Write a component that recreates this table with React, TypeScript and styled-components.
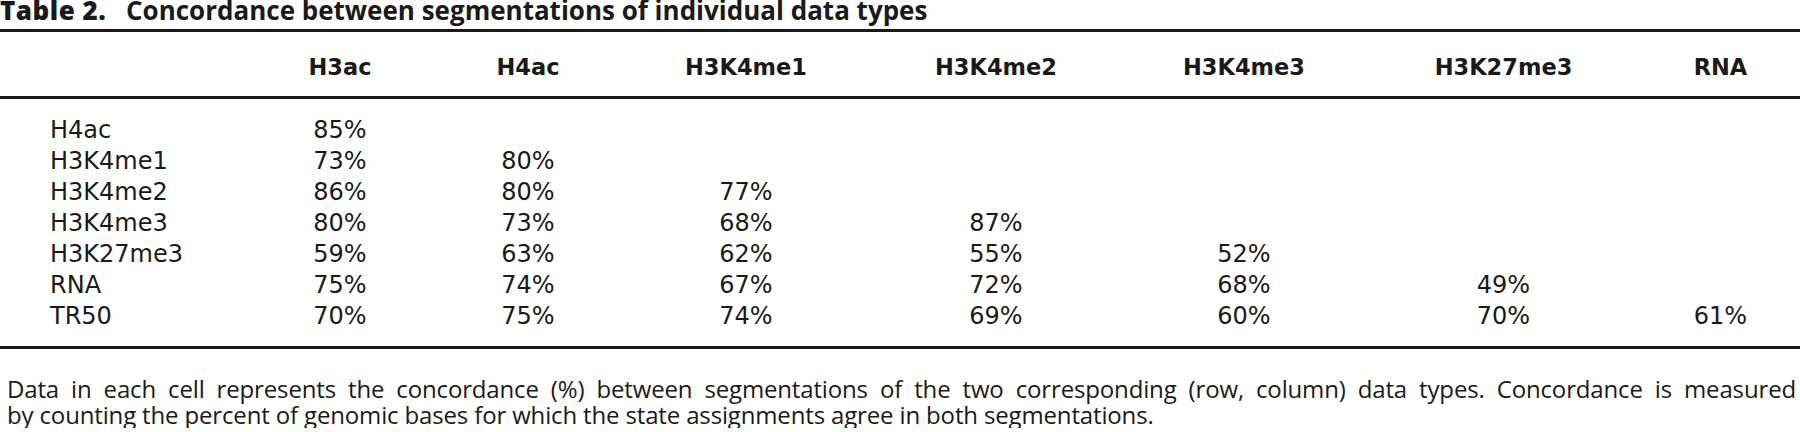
import styled, { createGlobalStyle } from "styled-components";

const GlobalStyle = createGlobalStyle`
  html, body {
    margin: 0;
    padding: 0;
    background: #ffffff;
  }
`;

const columns = ["H3ac", "H4ac", "H3K4me1", "H3K4me2", "H3K4me3", "H3K27me3", "RNA"];

const rows: { label: string; values: string[] }[] = [
  { label: "H4ac", values: ["85%"] },
  { label: "H3K4me1", values: ["73%", "80%"] },
  { label: "H3K4me2", values: ["86%", "80%", "77%"] },
  { label: "H3K4me3", values: ["80%", "73%", "68%", "87%"] },
  { label: "H3K27me3", values: ["59%", "63%", "62%", "55%", "52%"] },
  { label: "RNA", values: ["75%", "74%", "67%", "72%", "68%", "49%"] },
  { label: "TR50", values: ["70%", "75%", "74%", "69%", "60%", "70%", "61%"] },
];

const Page = styled.main`
  width: 1800px;
  color: #1a1a1a;
`;

const Caption = styled.h1`
  margin: 0 0 8px;
  font-family: "Open Sans", "DejaVu Sans", sans-serif;
  font-size: 26px;
  line-height: 21px;
  font-weight: 700;
  white-space: nowrap;
`;

const CaptionLabel = styled.span`
  display: inline-block;
  width: 126px;
  font-weight: 800;
  letter-spacing: 0.5px;
`;

const Table = styled.section`
  border-top: 3px solid #1a1a1a;
  border-bottom: 3px solid #1a1a1a;
`;

const Grid = styled.div`
  display: grid;
  grid-template-columns: 246px 188px 188px 248px 252px 244px 275px 159px;
`;

const HeadRow = styled(Grid)`
  padding: 21px 0 15px;
  border-bottom: 3px solid #1a1a1a;
  font-family: "DejaVu Sans", "Open Sans", sans-serif;
  font-size: 22.5px;
  line-height: 28px;
  font-weight: 700;
`;

const Body = styled.div`
  padding: 16px 0 14px;
  font-family: "DejaVu Sans", "Open Sans", sans-serif;
  font-size: 24px;
  line-height: 31px;
`;

const Cell = styled.div<{ $label?: boolean }>`
  text-align: ${({ $label }) => ($label ? "left" : "center")};
  padding-left: ${({ $label }) => ($label ? "50px" : "0")};
  white-space: nowrap;
`;

const Footnote = styled.div`
  padding-top: 27px;
  width: 1796px;
  font-family: "Open Sans", "DejaVu Sans", sans-serif;
  font-size: 24px;
  line-height: 26px;
  letter-spacing: -0.15px;
`;

const FootLine = styled.div<{ $justify?: boolean }>`
  padding-left: 7px;
  white-space: nowrap;
  text-align: ${({ $justify }) => ($justify ? "justify" : "left")};
  text-align-last: ${({ $justify }) => ($justify ? "justify" : "left")};
`;

const App = () => {
  return (
    <>
      <GlobalStyle />
      <Page>
        <Caption>
          <CaptionLabel>Table 2.</CaptionLabel>
          Concordance between segmentations of individual data types
        </Caption>
        <Table>
          <HeadRow>
            <Cell $label />
            {columns.map((c) => (
              <Cell key={c}>{c}</Cell>
            ))}
          </HeadRow>
          <Body>
            {rows.map((r) => (
              <Grid key={r.label}>
                <Cell $label>{r.label}</Cell>
                {columns.map((c, i) => (
                  <Cell key={c}>{r.values[i] ?? ""}</Cell>
                ))}
              </Grid>
            ))}
          </Body>
        </Table>
        <Footnote>
          <FootLine $justify>
            Data in each cell represents the concordance (%) between segmentations of the two
            corresponding (row, column) data types. Concordance is measured
          </FootLine>
          <FootLine>
            by counting the percent of genomic bases for which the state assignments agree in both
            segmentations.
          </FootLine>
        </Footnote>
      </Page>
    </>
  );
};

export default App;
